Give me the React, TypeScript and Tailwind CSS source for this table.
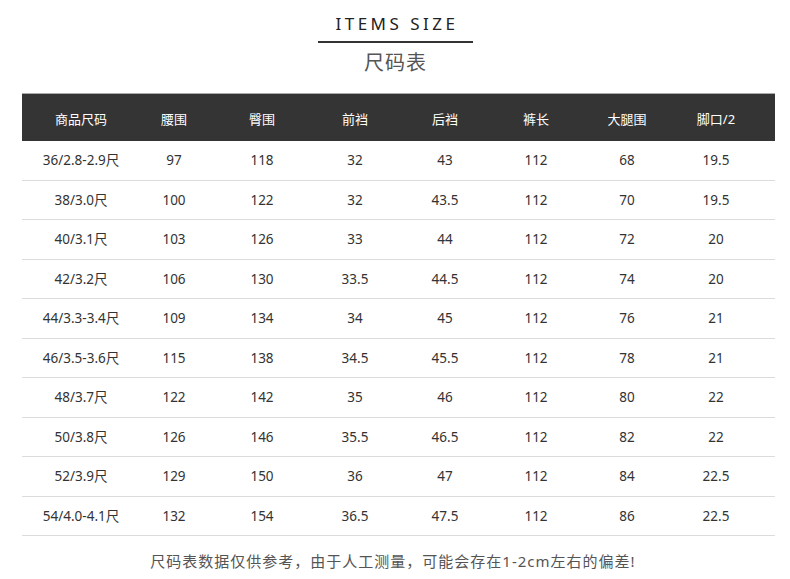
import React from "react";

const headers = ["商品尺码", "腰围", "臀围", "前裆", "后裆", "裤长", "大腿围", "脚口/2"];
const rows: string[][] = [
  ["36/2.8-2.9尺", "97", "118", "32", "43", "112", "68", "19.5"],
  ["38/3.0尺", "100", "122", "32", "43.5", "112", "70", "19.5"],
  ["40/3.1尺", "103", "126", "33", "44", "112", "72", "20"],
  ["42/3.2尺", "106", "130", "33.5", "44.5", "112", "74", "20"],
  ["44/3.3-3.4尺", "109", "134", "34", "45", "112", "76", "21"],
  ["46/3.5-3.6尺", "115", "138", "34.5", "45.5", "112", "78", "21"],
  ["48/3.7尺", "122", "142", "35", "46", "112", "80", "22"],
  ["50/3.8尺", "126", "146", "35.5", "46.5", "112", "82", "22"],
  ["52/3.9尺", "129", "150", "36", "47", "112", "84", "22.5"],
  ["54/4.0-4.1尺", "132", "154", "36.5", "47.5", "112", "86", "22.5"],
];

const cols = "grid grid-cols-[118px_68px_108px_78px_102px_80px_102px_76px_21px]";

export default function App() {
  return (
    <div
      className="w-[790px] h-[579px] bg-white overflow-hidden"
      style={{ fontFamily: '"Noto Sans", "Noto Sans CJK SC", sans-serif' }}
    >
      <div className="flex flex-col items-center pt-[12px]">
        <div className="text-[17px] leading-[24px] tracking-[3.5px] text-[#222] pl-[4px] font-normal">ITEMS SIZE</div>
        <div className="w-[155px] h-[2px] bg-[#333] mt-[5px]" />
        <div className="text-[20px] leading-[26px] text-[#555] mt-[7px] tracking-[1px] pl-[1px]">尺码表</div>
      </div>
      <div className="ml-[22px] w-[753px] mt-[17px]">
        <div className={`${cols} h-[48px] bg-[#343434] border-t border-[#aaa] items-center text-[13px] text-white pt-[5px]`}>
          {headers.map((h, i) => (
            <div key={i} className="text-center">{h}</div>
          ))}
          <div />
        </div>
        {rows.map((r, ri) => (
          <div key={ri} className={`${cols} h-[39.5px] border-b border-[#dcdcdc] items-center text-[13.5px] text-[#333]`}>
            {r.map((c, ci) => (
              <div key={ci} className="text-center">{c}</div>
            ))}
            <div />
          </div>
        ))}
      </div>
      <div className="text-center text-[15px] text-[#555] mt-[14px] pr-[4px] tracking-[1px]">
        尺码表数据仅供参考，由于人工测量，可能会存在1-2cm左右的偏差!
      </div>
    </div>
  );
}
